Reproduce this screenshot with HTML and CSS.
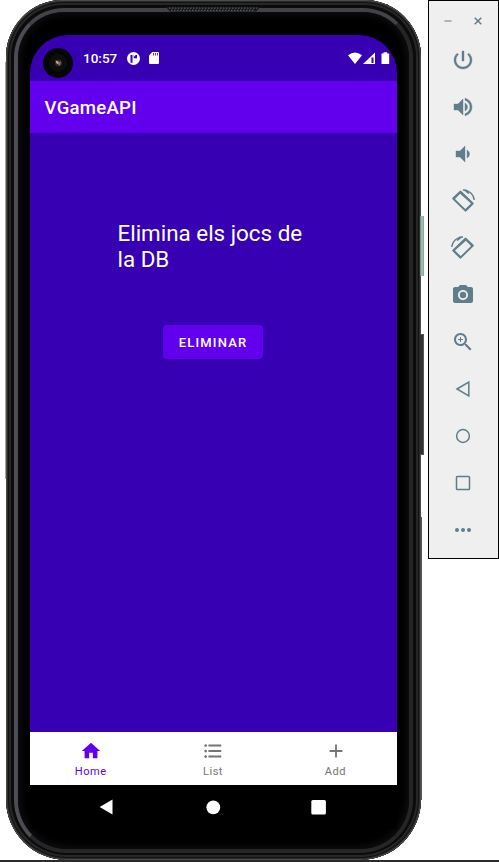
FILE: index.html
```html
<!DOCTYPE html>
<html lang="ca">
<head>
<meta charset="utf-8">
<title>VGameAPI</title>
<link rel="stylesheet" href="styles.css">
</head>
<body>
<div class="desktop">
  <div class="phone">
    <i class="side-key power-key"></i>
    <i class="side-key volume-key"></i>
    <i class="edge edge-left"></i>
    <i class="edge edge-right"></i>
    <div class="frame">
      <div class="bezel">
        <svg class="speaker" viewBox="0 0 94 5"><path d="M0 0h94l-4 4.500h-86z" fill="#17181a"/><path d="M3 1.200h88M5 3.300h84" stroke="#5a5b5d" stroke-width="1.300" stroke-dasharray="1.500 1.500"/></svg>
        <div class="screen">
          <header class="status">
            <span class="camera"><svg viewBox="0 0 30 30"><circle cx="15" cy="15" r="15" fill="#050505"/><circle cx="15" cy="15" r="9" fill="#0d0d0d"/><circle cx="15.500" cy="15" r="3.600" fill="#30272a"/><path d="M12.500 12.500l3 1 1 3-3-1z" fill="#c9aa9c"/><path d="M15 14.500l3-1-1 4-2-1z" fill="#9a6d5e"/></svg></span>
            <span class="clock">10:57</span>
            <svg class="st-app" viewBox="0 0 13 13"><circle cx="6.500" cy="6.500" r="6.500" fill="#fff"/><path d="M3.500 3h2v7.800h-2z" fill="#3700b3"/><path d="M6.700 3h3.300v3.300H6.700z" fill="#3700b3"/><path d="M7 3h1.200v1.200H7z" fill="#fff"/></svg>
            <svg class="st-sd" viewBox="0 0 10 12"><path d="M3.200 0H9q1 0 1 1v10q0 1-1 1H1q-1 0-1-1V3.500z" fill="#fff"/><path d="M4.500 1v2.500M6.500 1v2.500M8.500 1v2.500" stroke="#3700b3" stroke-width=".8"/></svg>
            <span class="grow"></span>
            <svg class="st-net" viewBox="0 0 42 13"><path d="M0 3.200Q7-2.200 14 3.200L7 12z" fill="#fff"/><path d="M15 12L27 .5V12z" fill="#fff"/><path d="M23.500 5.500h2v5.500h-2z" fill="#3700b3"/><path d="M33.500 1.500h2V.3h3.700v1.200h2V12h-7.700z" fill="#fff"/></svg>
          </header>
          <div class="appbar">VGameAPI</div>
          <main class="content">
            <p class="message">Elimina els jocs de<br>la DB</p>
            <button class="delete">ELIMINAR</button>
          </main>
          <nav class="tabs">
            <a class="tab active"><svg viewBox="0 0 24 24"><path d="M10 20v-6h4v6h5v-8h3L12 3 2 12h3v8z"/></svg><span>Home</span></a>
            <a class="tab"><svg viewBox="0 0 24 24"><path d="M4 10.500c-.83 0-1.500.67-1.500 1.500s.67 1.500 1.500 1.500 1.500-.67 1.500-1.500-.67-1.500-1.500-1.500zm0-6c-.83 0-1.500.67-1.500 1.500S3.170 7.500 4 7.500 5.500 6.830 5.500 6 4.830 4.500 4 4.500zm0 12c-.83 0-1.500.68-1.500 1.500s.68 1.500 1.500 1.500 1.500-.68 1.500-1.500-.67-1.500-1.500-1.500zM7 19h14v-2H7v2zm0-6h14v-2H7v2zm0-8v2h14V5H7z"/></svg><span>List</span></a>
            <a class="tab"><svg viewBox="0 0 24 24"><path d="M19 13h-6v6h-2v-6H5v-2h6V5h2v6h6v2z"/></svg><span>Add</span></a>
          </nav>
          <footer class="system">
            <svg viewBox="0 0 16 16"><path d="M.7 8L13.500.6v14.800z"/></svg>
            <svg viewBox="0 0 16 16"><circle cx="8.300" cy="8.300" r="6.900"/></svg>
            <svg viewBox="0 0 16 16"><rect x=".3" y=".9" width="14.600" height="14.600" rx="1.500"/></svg>
          </footer>
        </div>
      </div>
    </div>
  </div>
  <aside class="toolbar">
    <div class="window-keys">
      <svg viewBox="0 0 8 8"><path d="M.5 4h7" stroke="#9eb0b9" stroke-width="1.800"/></svg>
      <svg viewBox="0 0 8 8"><path d="M.7.7l6.600 6.600M7.300.7L.7 7.300" stroke="#607d8b" stroke-width="1.500"/></svg>
    </div>
    <svg class="tool" viewBox="0 0 24 24"><path stroke="#607d8b" stroke-width=".4" d="M13 3h-2v10h2V3zm4.830 2.170l-1.420 1.420C17.990 7.860 19 9.810 19 12c0 3.870-3.130 7-7 7s-7-3.130-7-7c0-2.190 1.010-4.140 2.580-5.420L6.170 5.170C4.230 6.820 3 9.260 3 12c0 4.970 4.030 9 9 9s9-4.030 9-9c0-2.740-1.230-5.180-3.170-6.830z"/></svg>
    <svg class="tool" viewBox="0 0 24 24"><path stroke="#607d8b" stroke-width=".4" d="M3 9v6h4l5 5V4L7 9H3zm13.500 3c0-1.770-1.020-3.290-2.500-4.030v8.050c1.480-.73 2.500-2.250 2.500-4.020zM14 3.230v2.060c2.890.86 5 3.540 5 6.710s-2.110 5.850-5 6.710v2.060c4.010-.91 7-4.490 7-8.770s-2.990-7.860-7-8.770z"/></svg>
    <svg class="tool" viewBox="0 0 24 24"><path stroke="#607d8b" stroke-width=".4" d="M18.500 12c0-1.770-1.020-3.290-2.500-4.030v8.050c1.480-.73 2.500-2.250 2.500-4.020zM5 9v6h4l5 5V4L9 9H5z"/></svg>
    <svg class="tool" viewBox="0 0 24 24"><g id="rotate"><path fill-rule="evenodd" d="M8.700 1.900Q9.500 1.200 10.300 2L22.400 13.700Q23.200 14.500 22.400 15.300L15.400 22.300Q14.600 23 13.800 22.300L1.500 10.300Q.8 9.500 1.500 8.700zM9.100 4.800L4 9.900l10.300 10.200 5.700-5.500z"/><path d="M12 1.200c5.800-.5 10.700 4.100 11.200 9.800" fill="none" stroke="#607d8b" stroke-width="1.300"/><path d="M11.800.5h3.700l3 3.800-1.200.6z"/></g></svg>
    <svg class="tool" viewBox="0 0 24 24"><use href="#rotate" transform="matrix(-1 0 0 1 24 0)"/></svg>
    <svg class="tool" viewBox="0 0 24 24"><path fill-rule="evenodd" d="M9 2L7.170 4H4c-1.100 0-2 .9-2 2v12c0 1.100.9 2 2 2h16c1.100 0 2-.9 2-2V6c0-1.100-.9-2-2-2h-3.170L15 2H9zm3 15c-2.760 0-5-2.240-5-5s2.240-5 5-5 5 2.240 5 5-2.240 5-5 5z"/><circle cx="12" cy="12" r="3.200"/></svg>
    <svg class="tool" viewBox="0 0 24 24"><path d="M15.500 14h-.79l-.28-.27C15.410 12.590 16 11.110 16 9.500 16 5.910 13.090 3 9.500 3S3 5.910 3 9.500 5.910 16 9.500 16c1.610 0 3.090-.59 4.230-1.570l.27.28v.79l5 4.990L20.490 19l-4.990-5zm-6 0C7.010 14 5 11.990 5 9.500S7.010 5 9.500 5 14 7.010 14 9.500 11.990 14 9.500 14zM9 7h1v2h2v1h-2v2H9v-2H7V9h2z"/></svg>
    <svg class="tool line" viewBox="0 0 24 24"><path d="M6 12L17.800 5v14z"/></svg>
    <svg class="tool line" viewBox="0 0 24 24"><circle cx="12" cy="12" r="6.400"/></svg>
    <svg class="tool line" viewBox="0 0 24 24"><rect x="5.500" y="5.500" width="13" height="13" rx=".8"/></svg>
    <svg class="tool" viewBox="0 0 24 24"><circle cx="6" cy="12" r="2"/><circle cx="12" cy="12" r="2"/><circle cx="18" cy="12" r="2"/></svg>
  </aside>
  <div class="taskbar"></div>
</div>
</body>
</html>
```
FILE: styles.css
```css
* { box-sizing: border-box; }
html, body { margin: 0; }
body { background: #fff; font-family: Roboto, sans-serif; overflow: hidden; }
svg { display: block; flex: none; }

.desktop {
  position: relative;
  display: flex;
  align-items: flex-start;
  justify-content: space-between;
  width: 499px;
  height: 862px;
  padding-left: 6px;
}

.phone {
  position: relative;
  width: 415px;
  height: 860px;
  padding: 8px 8px 7px;
  border-radius: 57px 57px 61px 61px;
  background: #0c0c0c;
  box-shadow: inset 0 0 0 1px #4b4d4b, inset 0 0 0 2px #292b29,
    inset 0 0 0 3px #121312, inset 0 0 0 5px #262726, inset 0 0 0 6px #0b0b0b;
}

.frame {
  height: 845px;
  border: 4px solid;
  border-color: #424247 #252526 #262628 #4c4c52;
  border-radius: 50px 50px 53px 53px;
  background: #000;
}

.bezel {
  position: relative;
  height: 837px;
  padding: 23px 12px 0;
  border-radius: 46px 46px 49px 49px;
  box-shadow: inset 0 0 9px 2px #101114;
}

.speaker { position: absolute; top: -5px; left: 148px; width: 94px; height: 5px; }

.side-key { position: absolute; left: 414px; width: 4px; }
.power-key { top: 216px; height: 60px; background: linear-gradient(90deg, #6e8179, #a4cab9 50%, #809a8e); }
.volume-key { top: 334px; height: 121px; background: #333; border: 1px solid #555; border-left: 0; }
.edge { position: absolute; width: 1px; }
.edge-left { left: -1px; top: 62px; height: 417px; background: #a4a6a4; }
.edge-right { left: 415px; top: 517px; height: 283px; background: #555; }

.screen {
  display: flex;
  flex-direction: column;
  width: 367px;
  height: 794px;
  border-radius: 38px 38px 0 0;
  overflow: hidden;
  background: #3700b3;
}

.status { display: flex; height: 46px; padding: 0 7px 0 13px; color: #fff; }
.camera { width: 30px; height: 30px; margin: 13px 10px 0 0; }
.clock { width: 44px; padding-top: 15px; font-size: 13.5px; line-height: 16px; font-weight: 500; }
.st-app { width: 13px; height: 13px; margin-top: 17px; }
.st-sd { width: 10px; height: 12px; margin: 17px 0 0 9px; }
.grow { flex: 1; }
.st-net { width: 42px; height: 13px; margin-top: 17px; }

.appbar {
  height: 52px;
  padding-left: 14.5px;
  background: #6200ee;
  color: #fff;
  font-size: 18.6px;
  line-height: 54px;
  font-weight: 500;
  letter-spacing: .25px;
}

.content { height: 599px; padding: 87px 0 0 87.5px; }
.message { margin: 0; color: #fff; font-size: 22.4px; line-height: 26px; }
.delete {
  display: block;
  width: 100px;
  height: 34px;
  margin: 53px 0 0 45px;
  padding: 2px 0 0 1px;
  border: 0;
  border-radius: 4px;
  background: #6200ee;
  box-shadow: 0 1px 2px #25008077;
  color: #fff;
  font: 500 13px/32px Roboto, sans-serif;
  letter-spacing: 1.16px;
}

.tabs { display: grid; grid-template-columns: repeat(3, 1fr); height: 53px; background: #fff; }
.tab { display: flex; flex-direction: column; align-items: center; padding-top: 8px; color: #757575; font-size: 11.1px; line-height: 14px; letter-spacing: .45px; }
.tab svg { width: 22px; height: 22px; margin-bottom: 3px; }
.tab svg { fill: currentColor; }
.tab span { margin-right: 1px; }
.active { color: #6200ee; }

.system { display: flex; gap: 90px; height: 44px; padding: 14px 0 0 69px; background: #000; }
.system svg { width: 16px; height: 16px; fill: #fff; }

.toolbar {
  display: flex;
  flex-direction: column;
  align-items: center;
  gap: 23px;
  width: 71px;
  height: 559px;
  padding-right: 1px;
  border: 1px solid #000;
  background: #efefef;
}
.window-keys { display: flex; gap: 22px; height: 24px; padding-top: 16px; }
.window-keys svg { width: 8px; height: 8px; }
.tool { width: 24px; height: 24px; fill: #607d8b; }
.line { fill: none; stroke: #607d8b; stroke-width: 1.5; }

.taskbar { position: absolute; left: 0; bottom: 0; width: 499px; height: 2px; background: #2c2a2b; }
```
